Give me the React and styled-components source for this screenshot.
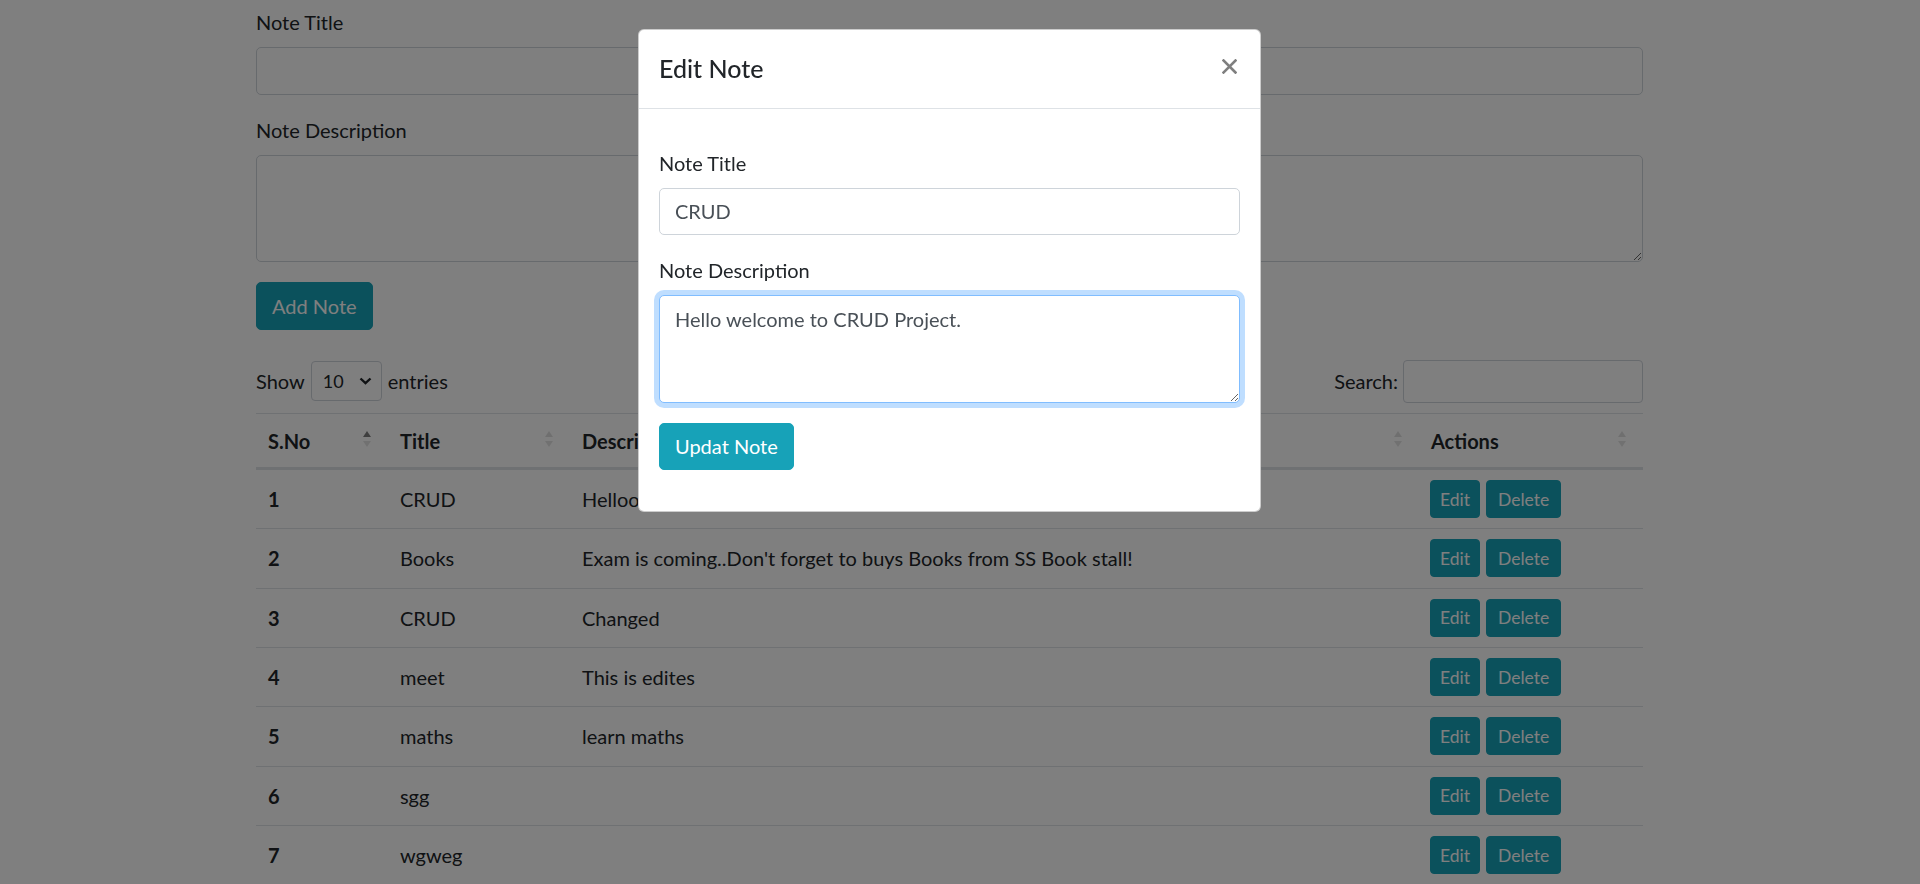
import styled, { createGlobalStyle } from 'styled-components';

const GlobalStyle = createGlobalStyle`
    * {
        box-sizing: border-box;
    }

    html,
    body {
        margin: 0;
        height: 884px;
        overflow: hidden;
        background: #fff;
        font-family: Lato, 'Liberation Sans', sans-serif;
        color: #212529;
    }
`;

const notes = [
    { id: 1, title: 'CRUD', description: 'Helloo welcome to CRUD Project.' },
    {
        id: 2,
        title: 'Books',
        description:
            "Exam is coming..Don't forget to buys Books from SS Book stall!",
    },
    { id: 3, title: 'CRUD', description: 'Changed' },
    { id: 4, title: 'meet', description: 'This is edites' },
    { id: 5, title: 'maths', description: 'learn maths' },
    { id: 6, title: 'sgg', description: '' },
    { id: 7, title: 'wgweg', description: '' },
];

const columns = [
    { key: 'sno', label: 'S.No', active: true },
    { key: 'title', label: 'Title' },
    { key: 'description', label: 'Description' },
    { key: 'actions', label: 'Actions' },
];

const SortIcon = ({ active }) => (
    <SortStack>
        <ArrowUp $active={active} />
        <ArrowDown />
    </SortStack>
);

const CloseIcon = () => (
    <svg width='15' height='15' viewBox='0 0 15 15'>
        <path
            d='M1.5 1.5L13.5 13.5M13.5 1.5L1.5 13.5'
            stroke='currentColor'
            strokeWidth='2.6'
            strokeLinecap='square'
        />
    </svg>
);

const Chevron = () => (
    <svg width='13' height='8' viewBox='0 0 13 8'>
        <path
            d='M1.5 1.5L6.5 6.2L11.5 1.5'
            fill='none'
            stroke='currentColor'
            strokeWidth='2.4'
        />
    </svg>
);

const App = () => {
    return (
        <>
            <GlobalStyle />
            <Page>
                <FormGroup>
                    <Label>Note Title</Label>
                    <Input type='text' />
                </FormGroup>
                <FormGroup>
                    <Label>Note Description</Label>
                    <TextArea />
                </FormGroup>
                <InfoButton>Add Note</InfoButton>

                <Toolbar>
                    <ToolLabel>
                        Show
                        <SelectBox>
                            10
                            <Chevron />
                        </SelectBox>
                        entries
                    </ToolLabel>
                    <ToolLabel>
                        Search:
                        <SearchInput type='search' />
                    </ToolLabel>
                </Toolbar>

                <Table>
                    <HeadRow>
                        {columns.map((col) => (
                            <HeadCell key={col.key}>
                                {col.label}
                                <SortIcon active={col.active} />
                            </HeadCell>
                        ))}
                    </HeadRow>
                    {notes.map((note) => (
                        <BodyRow key={note.id}>
                            <Cell $bold>{note.id}</Cell>
                            <Cell>{note.title}</Cell>
                            <Cell>{note.description}</Cell>
                            <ActionsCell>
                                <SmallButton>Edit</SmallButton>
                                <SmallButton $wide>Delete</SmallButton>
                            </ActionsCell>
                        </BodyRow>
                    ))}
                </Table>
            </Page>

            <Backdrop />

            <ModalWrapper>
                <Modal>
                    <ModalHeader>
                        <ModalTitle>Edit Note</ModalTitle>
                        <CloseButton aria-label='Close'>
                            <CloseIcon />
                        </CloseButton>
                    </ModalHeader>
                    <ModalBody>
                        <FormGroup>
                            <Label>Note Title</Label>
                            <Input type='text' defaultValue='CRUD' />
                        </FormGroup>
                        <FormGroup>
                            <Label>Note Description</Label>
                            <TextArea
                                $focused
                                defaultValue='Hello welcome to CRUD Project.'
                            />
                        </FormGroup>
                        <InfoButton>Updat Note</InfoButton>
                    </ModalBody>
                </Modal>
            </ModalWrapper>
        </>
    );
};

export default App;

const Page = styled.div`
    width: 1387px;
    margin-left: 256px;
    padding-top: 7px;
`;

const FormGroup = styled.div`
    margin-bottom: 20px;
`;

const Label = styled.label`
    display: block;
    font-size: 20px;
    line-height: 30px;
    margin-bottom: 10px;
    color: #212529;
`;

const Input = styled.input`
    display: block;
    width: 100%;
    height: 47.5px;
    padding: 7.5px 15px;
    font-family: inherit;
    font-size: 20px;
    line-height: 30px;
    color: #495057;
    background: #fff;
    border: 1px solid #ced4da;
    border-radius: 5px;
    outline: none;
`;

const TextArea = styled.textarea`
    display: block;
    width: 100%;
    height: 107.5px;
    padding: 7.5px 15px;
    font-family: inherit;
    font-size: 20px;
    line-height: 30px;
    color: #495057;
    background: #fff;
    border: 1px solid ${(p) => (p.$focused ? '#80bdff' : '#ced4da')};
    border-radius: 5px;
    outline: none;
    resize: vertical;
    box-shadow: ${(p) =>
        p.$focused ? '0 0 0 5px rgba(0, 123, 255, 0.25)' : 'none'};
`;

const InfoButton = styled.button`
    display: inline-block;
    height: 47.5px;
    padding: 0 15px;
    font-family: inherit;
    font-size: 20px;
    line-height: 30px;
    color: #fff;
    background: #17a2b8;
    border: 1px solid #17a2b8;
    border-radius: 5px;
    cursor: pointer;
`;

const Toolbar = styled.div`
    display: flex;
    justify-content: space-between;
    align-items: center;
    height: 44px;
    margin-top: 29.5px;
    margin-bottom: 10px;
`;

const ToolLabel = styled.label`
    display: flex;
    align-items: center;
    gap: 6px;
    font-size: 20px;
    color: #212529;
`;

const SelectBox = styled.div`
    display: flex;
    align-items: center;
    justify-content: space-between;
    width: 71px;
    height: 40px;
    padding: 0 9px 0 11px;
    font-size: 18px;
    color: #212529;
    border: 1px solid #ced4da;
    border-radius: 4px;
    background: #fff;
`;

const SearchInput = styled.input`
    width: 240px;
    height: 43px;
    border: 1px solid #ced4da;
    border-radius: 4px;
    outline: none;
    margin-left: -1px;
`;

const Table = styled.div`
    border-top: 1px solid #dee2e6;
`;

const grid = `
    display: grid;
    grid-template-columns: 132px 182px 849px 224px;
    align-items: center;
`;

const HeadRow = styled.div`
    ${grid}
    height: 55px;
    border-bottom: 2px solid #dee2e6;
`;

const HeadCell = styled.div`
    display: flex;
    align-items: center;
    justify-content: space-between;
    padding: 0 17px 0 12px;
    font-size: 20px;
    font-weight: 700;
    color: #212529;
`;

const SortStack = styled.span`
    display: flex;
    flex-direction: column;
    gap: 4px;
    margin-top: -3px;
`;

const ArrowUp = styled.span`
    width: 0;
    height: 0;
    border-left: 4px solid transparent;
    border-right: 4px solid transparent;
    border-bottom: 6px solid
        ${(p) => (p.$active ? 'rgba(0,0,0,0.5)' : 'rgba(0,0,0,0.125)')};
`;

const ArrowDown = styled.span`
    width: 0;
    height: 0;
    border-left: 4px solid transparent;
    border-right: 4px solid transparent;
    border-top: 6px solid rgba(0, 0, 0, 0.11);
`;

const BodyRow = styled.div`
    ${grid}
    height: 59.33px;
    border-top: 1px solid #dee2e6;

    &:first-of-type {
        border-top: none;
    }
`;

const Cell = styled.div`
    padding: 0 12px;
    font-size: 20px;
    font-weight: ${(p) => (p.$bold ? 700 : 400)};
    color: #212529;
    white-space: nowrap;
`;

const ActionsCell = styled.div`
    display: flex;
    gap: 6px;
    padding: 0 11px;
`;

const SmallButton = styled.button`
    height: 38px;
    padding: 0 ${(p) => (p.$wide ? '11px' : '9px')};
    font-family: inherit;
    font-size: 17.5px;
    color: #fff;
    background: #17a2b8;
    border: 1px solid #17a2b8;
    border-radius: 4px;
`;

const Backdrop = styled.div`
    position: fixed;
    inset: 0;
    background: rgba(0, 0, 0, 0.5);
    z-index: 1040;
`;

const ModalWrapper = styled.div`
    position: fixed;
    inset: 0;
    z-index: 1050;
    display: flex;
    justify-content: center;
    align-items: flex-start;
    padding: 29px 21px 0 0;
`;

const Modal = styled.div`
    width: 623px;
    background: #fff;
    border: 1px solid rgba(0, 0, 0, 0.2);
    border-radius: 6px;
`;

const ModalHeader = styled.div`
    display: flex;
    align-items: center;
    justify-content: space-between;
    padding: 20px 23px 20px 20px;
    border-bottom: 1px solid #dee2e6;
`;

const ModalTitle = styled.h5`
    margin: 0;
    font-size: 25px;
    line-height: 37.5px;
    font-weight: 500;
    color: #212529;
`;

const CloseButton = styled.button`
    display: flex;
    padding: 0;
    margin-top: -4px;
    border: none;
    background: none;
    color: rgba(0, 0, 0, 0.5);
`;

const ModalBody = styled.div`
    padding: 39px 20px 41px;
`;
